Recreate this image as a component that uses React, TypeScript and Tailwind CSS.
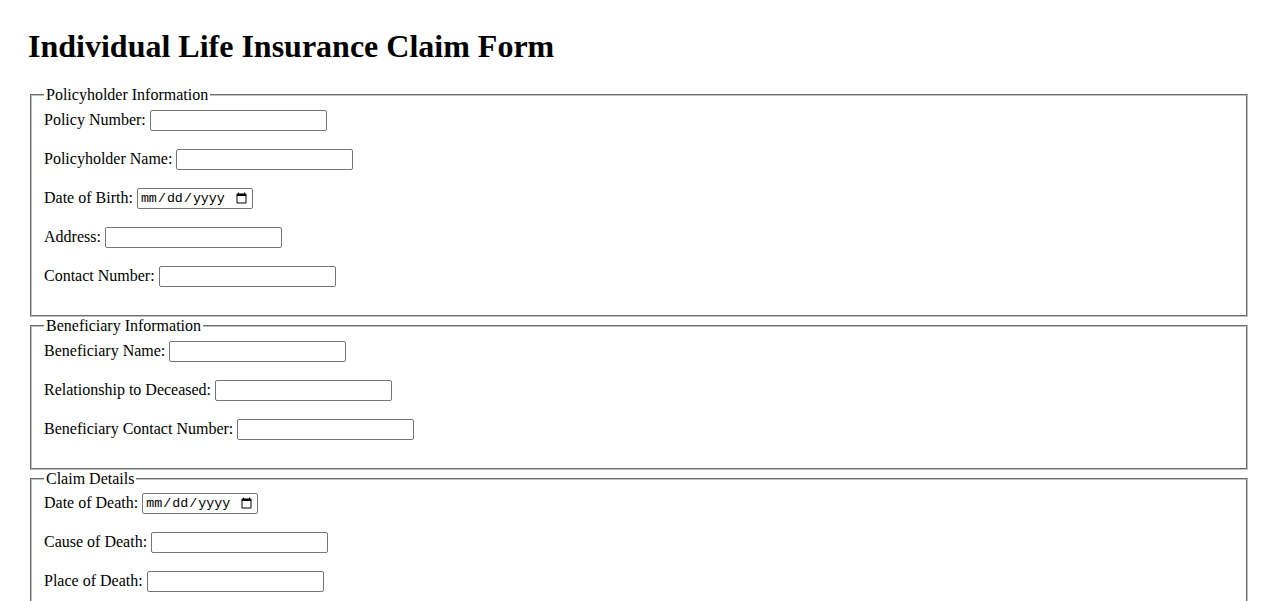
type Field = {
  label: string
  type?: 'text' | 'date'
}

type Section = {
  legend: string
  fields: Field[]
}

const sections: Section[] = [
  {
    legend: 'Policyholder Information',
    fields: [
      { label: 'Policy Number:' },
      { label: 'Policyholder Name:' },
      { label: 'Date of Birth:', type: 'date' },
      { label: 'Address:' },
      { label: 'Contact Number:' },
    ],
  },
  {
    legend: 'Beneficiary Information',
    fields: [
      { label: 'Beneficiary Name:' },
      { label: 'Relationship to Deceased:' },
      { label: 'Beneficiary Contact Number:' },
    ],
  },
  {
    legend: 'Claim Details',
    fields: [
      { label: 'Date of Death:', type: 'date' },
      { label: 'Cause of Death:' },
      { label: 'Place of Death:' },
    ],
  },
]

function FormRow({ field }: { field: Field }) {
  const isDate = field.type === 'date'
  return (
    <div className="mb-[18px] leading-[normal]">
      <label className={isDate ? 'align-[-1px]' : ''}>{field.label}</label>{' '}
      {isDate ? (
        <input
          type="date"
          className="h-[21px] w-[116px] rounded-[2px] border border-solid border-[#767676] bg-white px-[2px] py-[1px] align-baseline font-['Liberation_Mono',monospace] text-[13.33px] text-black"
        />
      ) : (
        <input
          type="text"
          className="h-[21px] w-[177px] rounded-[2px] border border-solid border-[#767676] bg-white px-[2px] py-[1px] align-baseline font-['Liberation_Sans',Arial,sans-serif] text-[13.33px] text-black"
        />
      )}
    </div>
  )
}

export default function App() {
  return (
    <div className="min-h-screen bg-white px-[28px] pt-[28px] font-['Liberation_Serif','Times_New_Roman',serif] text-[16px] text-black">
      <h1 className="mb-[21.44px] text-[32px] font-bold leading-[normal]">Individual Life Insurance Claim Form</h1>
      <form>
        {sections.map((section) => (
          <fieldset
            key={section.legend}
            className="mx-[2px] border-2 border-[#c0c0c0] px-3 pt-[5.6px] pb-[10px] [border-style:groove]"
          >
            <legend className="px-[2px] leading-[normal]">{section.legend}</legend>
            {section.fields.map((field) => (
              <FormRow key={field.label} field={field} />
            ))}
          </fieldset>
        ))}
      </form>
    </div>
  )
}
